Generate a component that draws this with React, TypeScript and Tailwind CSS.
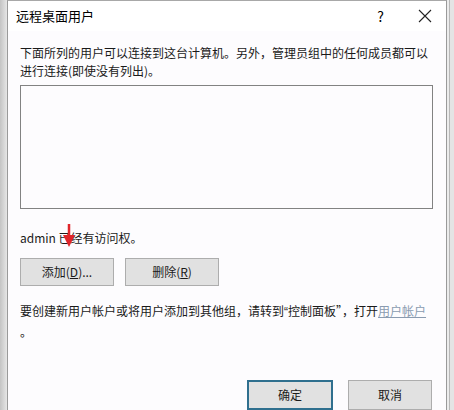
import React from 'react';

const font = { fontFamily: '"Noto Sans CJK SC", "Noto Sans", sans-serif' };

export default function App() {
  return (
    <div className="w-[454px] h-[410px] flex bg-[#dcdcdc] overflow-hidden text-[#1a1a1a]" style={font}>
      {/* left strip */}
      <div className="w-[7px] shrink-0 bg-gradient-to-r from-[#c4c4c4] to-[#e6e6e6]" />

      <div className="relative flex-1 min-w-0 flex flex-col bg-[#fdfcfe] border-l border-r border-[#9a9a9a] border-t border-t-[#a8a8a8]">
        {/* title bar */}
        <div className="h-[30px] flex items-center justify-between pl-[8px] pr-[14px] bg-white">
          <span className="text-[13px] text-black">远程桌面用户</span>
          <div className="flex items-center gap-[34px]">
            <span className="text-[14px] text-black">?</span>
            <svg width="14" height="14" viewBox="0 0 14 14">
              <path d="M1 1 L13 13 M13 1 L1 13" stroke="#222" strokeWidth="1.1" />
            </svg>
          </div>
        </div>

        <div className="flex flex-col px-[12px] text-[12px] leading-[18px]">
          <p className="mt-[13px] whitespace-nowrap">
            下面所列的用户可以连接到这台计算机。另外，管理员组中的任何成员都可以
            <br />
            进行连接(即使没有列出)。
          </p>

          <div className="mt-[5px] h-[124px] w-[413px] border border-[#828282] bg-[#fdfcfe]" />

          <p className="mt-[20px]">admin 已经有访问权。</p>

          <div className="mt-[11px] flex gap-[11px]">
            <button className="w-[94px] h-[28px] bg-[#e1e1e1] border border-[#adadad] text-[12px]">
              添加(<span className="underline">D</span>)...
            </button>
            <button className="w-[94px] h-[28px] bg-[#e1e1e1] border border-[#adadad] text-[12px]">
              删除(<span className="underline">R</span>)
            </button>
          </div>

          <p className="mt-[15px] leading-[20px] whitespace-nowrap">
            要创建新用户帐户或将用户添加到其他组，请转到
            <span className="font-['Liberation_Sans']">“</span>
            控制面板”，打开
            <span className="text-[#8a9bb0] underline">用户帐户</span>
            <br />。
          </p>

          <div className="mt-[38px] flex gap-[15px] pl-[227px]">
            <button className="w-[86px] h-[30px] shrink-0 bg-[#e1e1e1] border-2 border-[#2f6f8e] text-[12px]">确定</button>
            <button className="w-[84px] h-[30px] shrink-0 bg-[#e1e1e1] border border-[#adadad] text-[12px]">取消</button>
          </div>
        </div>

        {/* red arrow annotation */}
        <svg className="absolute left-[54px] top-[223px]" width="14" height="24" viewBox="0 0 14 24">
          <path d="M7 0 L7 14" stroke="#e0262b" strokeWidth="2.5" />
          <path d="M1 11 L13 11 L7 23 Z" fill="#e0262b" />
        </svg>
      </div>

      {/* right strip */}
      <div className="w-[7px] shrink-0 flex">
        <div className="w-[2px] bg-[#ececec]" />
        <div className="w-[1px] bg-[#b8b8b8]" />
        <div className="flex-1 bg-[#e4e4e4]" />
      </div>
    </div>
  );
}
